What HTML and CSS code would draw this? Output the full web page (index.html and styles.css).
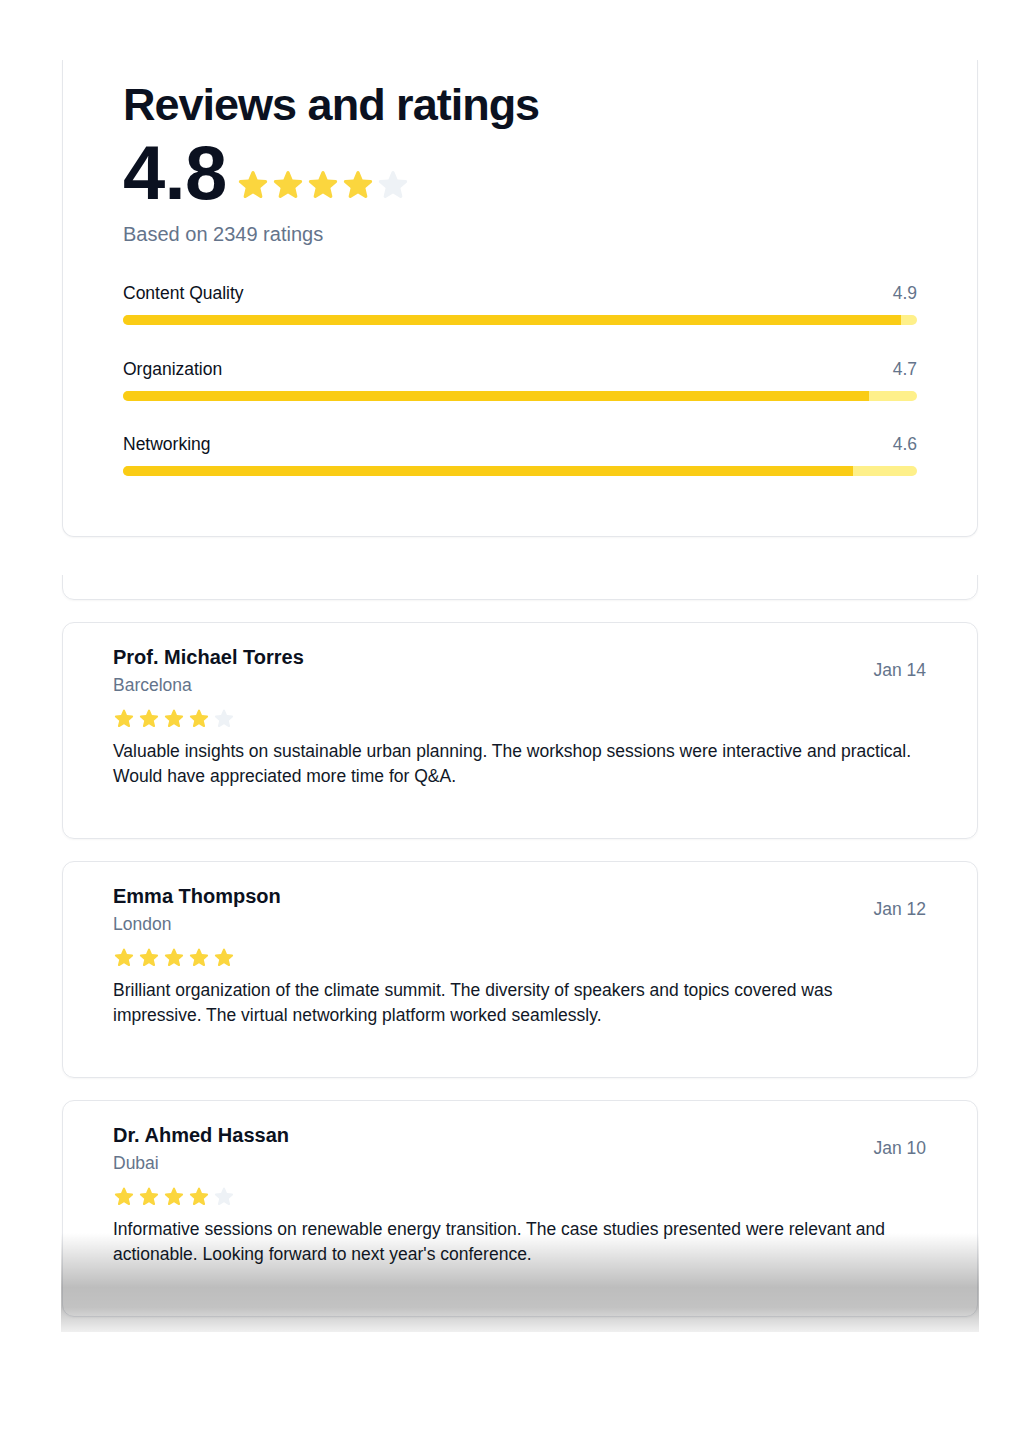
FILE: index.html
```html
<!DOCTYPE html>
<html lang="en">
<head>
    <meta charset="UTF-8">
    <meta name="viewport" content="width=device-width, initial-scale=1.0">
    <title>Reviews and ratings</title>
    <link rel="stylesheet" href="styles.css">
</head>
<body>
    <!-- one star shape, reused everywhere -->
    <svg class="sprite" aria-hidden="true">
        <symbol id="star" viewBox="0 0 20 20">
            <path d="M10.868 2.884c-.321-.772-1.415-.772-1.736 0l-1.83 4.401-4.753.381c-.833.067-1.171 1.107-.536 1.651l3.62 3.102-1.106 4.637c-.194.813.691 1.456 1.405 1.02L10 15.591l4.069 2.485c.713.436 1.598-.207 1.404-1.02l-1.106-4.637 3.62-3.102c.635-.544.297-1.584-.536-1.65l-4.752-.382-1.831-4.401Z"/>
        </symbol>
    </svg>

    <main class="page">
        <section class="summary">
            <h1 class="summary-title">Reviews and ratings</h1>
            <div class="overall">
                <span class="overall-score">4.8</span>
                <div class="stars stars-lg">
                    <svg class="star on"><use href="#star"/></svg>
                    <svg class="star on"><use href="#star"/></svg>
                    <svg class="star on"><use href="#star"/></svg>
                    <svg class="star on"><use href="#star"/></svg>
                    <svg class="star"><use href="#star"/></svg>
                </div>
            </div>
            <p class="overall-count">Based on 2349 ratings</p>

            <div class="breakdown">
                <div class="metric">
                    <div class="metric-head">
                        <span class="metric-name">Content Quality</span>
                        <span class="metric-value">4.9</span>
                    </div>
                    <div class="metric-track"><div class="metric-fill" style="width: 98%"></div></div>
                </div>
                <div class="metric">
                    <div class="metric-head">
                        <span class="metric-name">Organization</span>
                        <span class="metric-value">4.7</span>
                    </div>
                    <div class="metric-track"><div class="metric-fill" style="width: 94%"></div></div>
                </div>
                <div class="metric">
                    <div class="metric-head">
                        <span class="metric-name">Networking</span>
                        <span class="metric-value">4.6</span>
                    </div>
                    <div class="metric-track"><div class="metric-fill" style="width: 92%"></div></div>
                </div>
            </div>
        </section>

        <section class="reviews">
            <div class="reviews-list">
                <!-- previous card, scrolled almost out of view -->
                <article class="review review-past"></article>

                <article class="review">
                    <div class="review-head">
                        <div>
                            <h3 class="review-name">Prof. Michael Torres</h3>
                            <div class="review-city">Barcelona</div>
                        </div>
                        <span class="review-date">Jan 14</span>
                    </div>
                    <div class="stars">
                        <svg class="star on"><use href="#star"/></svg>
                        <svg class="star on"><use href="#star"/></svg>
                        <svg class="star on"><use href="#star"/></svg>
                        <svg class="star on"><use href="#star"/></svg>
                        <svg class="star"><use href="#star"/></svg>
                    </div>
                    <p class="review-text">Valuable insights on sustainable urban planning. The workshop sessions were interactive and practical. Would have appreciated more time for Q&amp;A.</p>
                </article>

                <article class="review">
                    <div class="review-head">
                        <div>
                            <h3 class="review-name">Emma Thompson</h3>
                            <div class="review-city">London</div>
                        </div>
                        <span class="review-date">Jan 12</span>
                    </div>
                    <div class="stars">
                        <svg class="star on"><use href="#star"/></svg>
                        <svg class="star on"><use href="#star"/></svg>
                        <svg class="star on"><use href="#star"/></svg>
                        <svg class="star on"><use href="#star"/></svg>
                        <svg class="star on"><use href="#star"/></svg>
                    </div>
                    <p class="review-text">Brilliant organization of the climate summit. The diversity of speakers and topics covered was impressive. The virtual networking platform worked seamlessly.</p>
                </article>

                <article class="review">
                    <div class="review-head">
                        <div>
                            <h3 class="review-name">Dr. Ahmed Hassan</h3>
                            <div class="review-city">Dubai</div>
                        </div>
                        <span class="review-date">Jan 10</span>
                    </div>
                    <div class="stars">
                        <svg class="star on"><use href="#star"/></svg>
                        <svg class="star on"><use href="#star"/></svg>
                        <svg class="star on"><use href="#star"/></svg>
                        <svg class="star on"><use href="#star"/></svg>
                        <svg class="star"><use href="#star"/></svg>
                    </div>
                    <p class="review-text">Informative sessions on renewable energy transition. The case studies presented were relevant and actionable. Looking forward to next year's conference.</p>
                </article>
            </div>
            <div class="reviews-fade"></div>
        </section>
    </main>
</body>
</html>
```

FILE: styles.css
```css
body {
    margin: 0;
    background: #fff;
    color: #0b1120;
    font-family: "Liberation Sans", Arial, sans-serif;
}

.sprite {
    display: none;
}

.page {
    width: 918px;
    margin-left: 61px;
    padding-top: 60px;
}

/* summary card (scrolled, top edge out of view) */
.summary {
    margin: 0 1px;
    padding: 18px 60px 60px;
    border: 1px solid #e5e7eb;
    border-top: 0;
    border-radius: 0 0 12px 12px;
    box-shadow: 0 1px 2px rgba(0, 0, 0, 0.04);
}

.summary-title {
    margin: 0;
    font-size: 45px;
    line-height: 54px;
    font-weight: 700;
    letter-spacing: -1px;
}

.overall {
    display: flex;
    align-items: center;
    gap: 9px;
    margin-top: 3px;
}

.overall-score {
    font-size: 76px;
    line-height: 76px;
    font-weight: 700;
    letter-spacing: -0.7px;
}

.overall-count {
    margin: 9px 0 0;
    font-size: 20px;
    line-height: 28px;
    color: #64748b;
}

.stars {
    display: flex;
    gap: 3px;
    margin-top: 9px;
}

.star {
    width: 22px;
    height: 22px;
    fill: #eef2f6;
}

.star.on {
    fill: #fbd63e;
}

.stars-lg {
    gap: 1px;
    margin-top: 22px;
}

.stars-lg .star {
    width: 34px;
    height: 34px;
}

.breakdown {
    margin-top: 32px;
}

.metric + .metric {
    margin-top: 30.5px;
}

.metric-head {
    display: flex;
    justify-content: space-between;
    font-size: 17.5px;
    line-height: 26px;
}

.metric-value {
    color: #64748b;
}

.metric-track {
    height: 10px;
    margin-top: 9px;
    border-radius: 5px;
    background: #fef08a;
    overflow: hidden;
}

.metric-fill {
    height: 100%;
    background: #facc15;
}

/* reviews list, scrolled a little */
.reviews {
    position: relative;
    height: 757px;
    margin-top: 38px;
    overflow: hidden;
}

.reviews-list {
    display: flex;
    flex-direction: column;
    gap: 22px;
    margin: -192px 1px 0;
}

.review {
    padding: 20px 51px 49px 50px;
    border: 1px solid #e5e7eb;
    border-radius: 12px;
    box-shadow: 0 1px 2px rgba(0, 0, 0, 0.04);
}

.review-past {
    box-sizing: border-box;
    height: 217px;
}

.review-head {
    display: flex;
    justify-content: space-between;
    align-items: center;
}

.review-name {
    margin: 0;
    font-size: 20px;
    line-height: 28px;
    font-weight: 700;
}

.review-city {
    margin-top: 2px;
    font-size: 17.5px;
    line-height: 25px;
    color: #64748b;
}

.review-date {
    font-size: 17.5px;
    line-height: 25px;
    color: #64748b;
}

.review-text {
    margin: 10px 6px 0 0;
    font-size: 17.5px;
    line-height: 25px;
    color: #111827;
}

.reviews-fade {
    position: absolute;
    left: 0;
    right: 0;
    bottom: 0;
    height: 99px;
    background: linear-gradient(to bottom,
        rgba(0, 0, 0, 0) 0%,
        rgba(0, 0, 0, 0.12) 25%,
        rgba(0, 0, 0, 0.26) 55%,
        rgba(0, 0, 0, 0.24) 75%,
        rgba(0, 0, 0, 0.06) 100%);
}
```
